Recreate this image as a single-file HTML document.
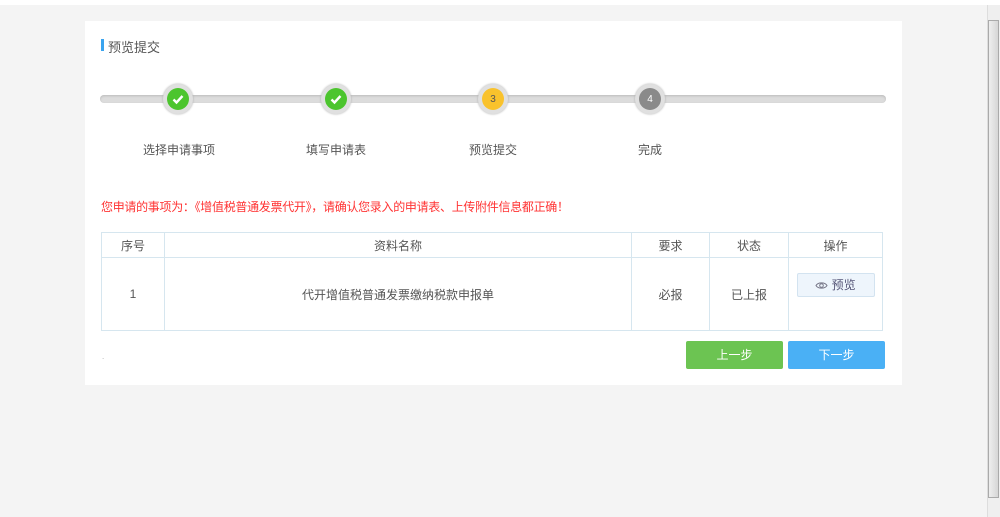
<!DOCTYPE html>
<html><head><meta charset="utf-8"><style>
*{margin:0;padding:0;box-sizing:border-box}
body{width:1000px;height:517px;background:#f4f4f4;font-family:"Liberation Sans","Noto Sans CJK SC",sans-serif;font-size:12px;color:#555;position:relative;overflow:hidden}
.abs{position:absolute}
.panel{left:85px;top:21px;width:817px;height:364px;background:#fff}
.line{left:100px;top:95px;width:786px;height:8px;background:#dcdcdc;border-radius:4px;box-shadow:inset 0 1px 2px #bbb}
.c{width:30px;height:30px;border-radius:50%;background:#e0e0e0;top:84px;box-shadow:0 0 2px #aaa}
.c i{position:absolute;left:4px;top:4px;width:22px;height:22px;border-radius:50%;display:flex;align-items:center;justify-content:center;font-style:normal;font-size:10px;color:#555}
.lab{top:141px;width:120px;text-align:center;font-size:12px;color:#555}
table{border-collapse:collapse;position:absolute;left:101px;top:232px;width:782px}
td{border:1px solid #d6e6ef;text-align:center;font-size:12px;color:#555}
.btn{top:341px;height:28px;width:97px;color:#fff;text-align:center;line-height:28px;border-radius:2px;font-size:12px}
</style></head><body>
<div class="abs panel"></div>
<div class="abs" style="left:101px;top:39px;width:3px;height:12px;background:#3aa4ef"></div>
<div class="abs" style="left:108px;top:37px;font-size:13px;color:#555">预览提交</div>
<div class="abs line"></div>
<div class="abs c" style="left:163px"><i style="background:#4cc52e"><svg width="14" height="14" viewBox="0 0 14 14"><path d="M2.5 7.5l3 3 6-6.5" stroke="#fff" stroke-width="2.4" fill="none"/></svg></i></div>
<div class="abs c" style="left:321px"><i style="background:#4cc52e"><svg width="14" height="14" viewBox="0 0 14 14"><path d="M2.5 7.5l3 3 6-6.5" stroke="#fff" stroke-width="2.4" fill="none"/></svg></i></div>
<div class="abs c" style="left:478px"><i style="background:#f9c22c">3</i></div>
<div class="abs c" style="left:635px"><i style="background:#8a8a8a;color:#fff">4</i></div>
<div class="abs lab" style="left:119px">选择申请事项</div>
<div class="abs lab" style="left:276px">填写申请表</div>
<div class="abs lab" style="left:433px">预览提交</div>
<div class="abs lab" style="left:590px">完成</div>
<div class="abs" style="left:101px;top:198px;color:#f33;font-size:12px;letter-spacing:-0.3px">您申请的事项为：《增值税普通发票代开》，请确认您录入的申请表、上传附件信息都正确！</div>
<table>
<tr style="height:25px"><td style="width:63px">序号</td><td style="width:467px">资料名称</td><td style="width:78px">要求</td><td style="width:79px">状态</td><td>操作</td></tr>
<tr style="height:73px"><td>1</td><td>代开增值税普通发票缴纳税款申报单</td><td>必报</td><td>已上报</td><td style="vertical-align:top;padding-top:15px"><div style="margin:0 auto;width:78px;height:24px;line-height:22px;border:1px solid #d3e3f0;background:#eef5fc;border-radius:2px;color:#557"><svg width="13" height="9" viewBox="0 0 13 9" style="vertical-align:-1px"><path d="M1 4.5C3 1 10 1 12 4.5 10 8 3 8 1 4.5z" fill="none" stroke="#778" stroke-width="1"/><circle cx="6.5" cy="4.5" r="1.8" fill="none" stroke="#778"/></svg> 预览</div></td></tr>
</table>
<div class="abs" style="left:102px;top:352px;color:#aaa;font-size:8px">.</div>
<div class="abs btn" style="left:686px;background:#6cc452">上一步</div>
<div class="abs btn" style="left:788px;background:#4ab0f5">下一步</div>
<div class="abs" style="left:0;top:0;width:1000px;height:5px;background:#fff"></div>
<div class="abs" style="left:987px;top:5px;width:13px;height:512px;background:#efefef;border-left:1px solid #ddd"></div>
<div class="abs" style="left:988px;top:20px;width:11px;height:478px;background:linear-gradient(90deg,#eee,#d6d6d6);border:1px solid #aaa"></div>
</body></html>
